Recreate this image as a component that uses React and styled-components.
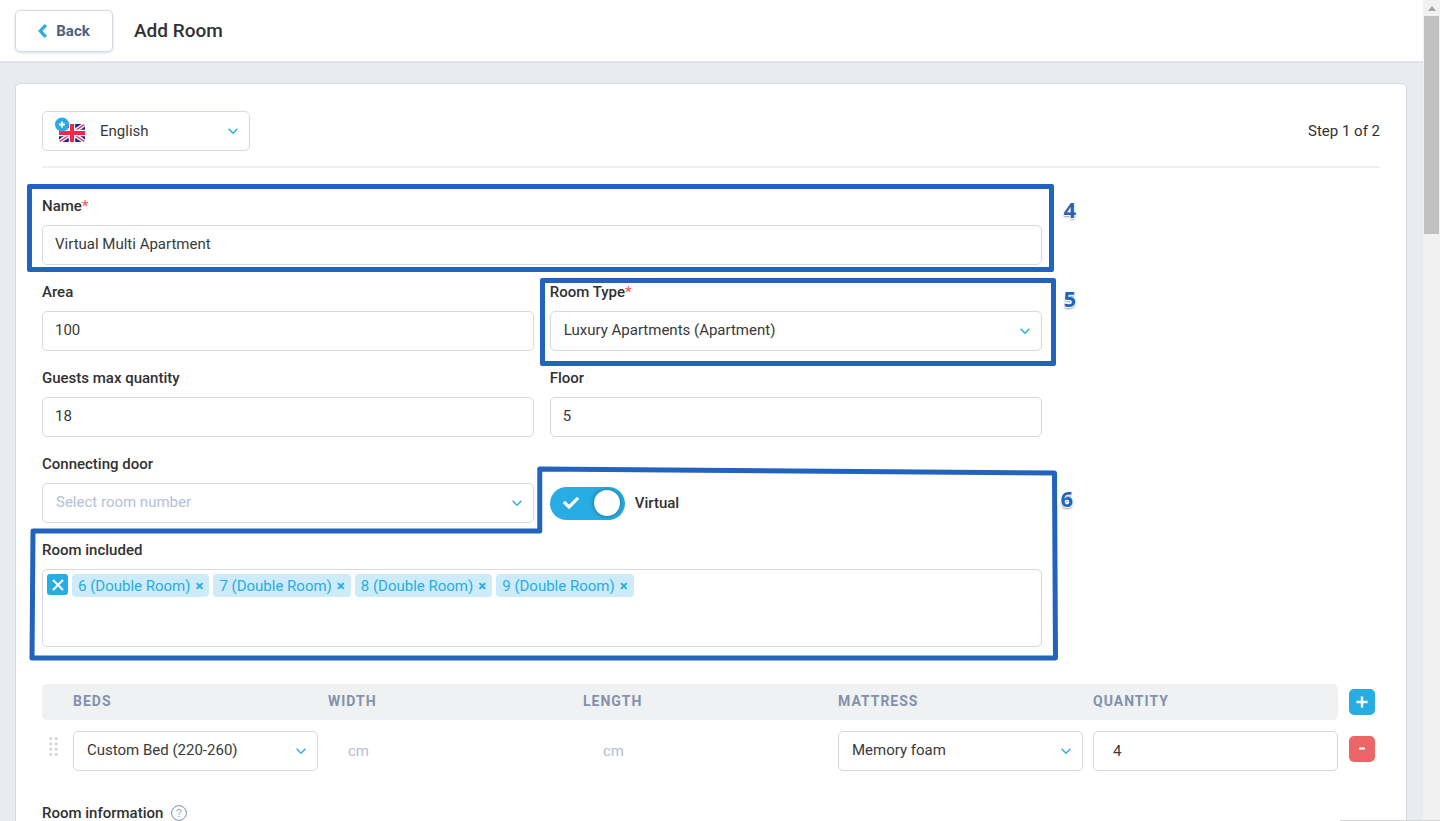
import React, { useState } from 'react';
import styled, { createGlobalStyle } from 'styled-components';
import { FaCheck } from 'react-icons/fa';

const GlobalStyle = createGlobalStyle`
  *, *::before, *::after {
    box-sizing: border-box;
  }

  body {
    margin: 0;
    background: #e8ebf0;
    color: #313131;
    font-family: Roboto, sans-serif;
    font-size: 15px;
    line-height: 20px;
  }

  input, select, button {
    font: inherit;
    color: inherit;
  }
`;

const Page = styled.div`
  display: flex;
  height: 100vh;
  overflow: hidden;
`;

const Main = styled.div`
  flex: 1;
  min-width: 0;
`;

const ScrollRail = styled.div`
  display: flex;
  flex-direction: column;
  align-items: center;
  width: 17px;
  background: #f1f1f1;
`;

const ScrollArrow = styled.div`
  display: flex;
  align-items: center;
  justify-content: center;
  height: 16px;
`;

const ScrollThumb = styled.div`
  width: 15px;
  height: 26.5%;
  background: #c1c1c1;
`;

const Header = styled.header`
  display: flex;
  align-items: center;
  gap: 21px;
  height: 63px;
  padding: 0 15px;
  background: #fff;
  border-bottom: 2px solid #dfe2e6;
`;

const BackButton = styled.button`
  display: flex;
  align-items: center;
  justify-content: center;
  gap: 9px;
  width: 98px;
  height: 42px;
  padding: 0;
  background: #fff;
  border: 1px solid #d3d9e3;
  border-radius: 5px;
  box-shadow: 0 1px 3px rgba(76, 95, 133, 0.2);
  color: #4c5f85;
  font-weight: 700;
  cursor: pointer;
`;

const Title = styled.h1`
  margin: 0;
  font-size: 19px;
  font-weight: 500;
`;

const Card = styled.section`
  margin: 20px 16px 20px 15px;
  padding: 27px 26px;
  background: #fff;
  border: 1px solid #d3d9e0;
  border-radius: 5px;
`;

const TopRow = styled.div`
  display: flex;
  align-items: center;
  justify-content: space-between;
  padding-bottom: 15px;
  border-bottom: 2px solid #eeeff0;
`;

const SelectWrap = styled.div`
  position: relative;
  width: ${(props) => props.$width || '100%'};
`;

const StyledSelect = styled.select`
  display: block;
  width: 100%;
  height: 40px;
  padding: ${(props) => (props.$flag ? '0 32px 0 57px' : '0 32px 2px 13px')};
  appearance: none;
  background: #fff;
  border: 1px solid #d5dae2;
  border-radius: 5px;
  color: ${(props) => (props.$empty ? '#b3c0d6' : '#393939')};
`;

const SelectArrow = styled.svg`
  position: absolute;
  top: 17px;
  right: 12px;
  pointer-events: none;
`;

const Flag = styled.svg`
  position: absolute;
  top: 6px;
  left: 13px;
  pointer-events: none;
`;

const FormLayout = styled.div`
  display: grid;
  grid-template-columns: repeat(12, 1fr);
  column-gap: 16px;
  padding-top: 28px;
`;

const Form = styled.div`
  grid-column: span 9;
  display: flex;
  flex-direction: column;
  gap: 17px;
`;

const Columns = styled.div`
  display: grid;
  grid-template-columns: 1fr 1fr;
  gap: 16px;
`;

const RoomSection = styled.div`
  position: relative;
  display: flex;
  flex-direction: column;
  gap: 17px;
`;

const FieldBox = styled.div`
  position: relative;
  display: flex;
  flex-direction: column;
  gap: 9px;
`;

const Label = styled.label`
  font-weight: 500;
`;

const Required = styled.span`
  color: #fb5d5d;
`;

const Input = styled.input`
  display: block;
  width: 100%;
  height: 40px;
  padding: ${(props) => (props.$wide ? '0 19px' : '0 12px 2px')};
  background: #fff;
  border: 1px solid ${(props) => (props.$plain ? 'transparent' : '#d5dae2')};
  border-radius: 5px;
  color: #393939;

  &::placeholder {
    color: #b3c0d6;
    opacity: 1;
  }
`;

const SwitchLabel = styled.label`
  align-self: end;
  display: flex;
  align-items: center;
  gap: 10px;
  height: 40px;
  font-weight: 500;
  cursor: pointer;
`;

const SwitchTrack = styled.span`
  display: flex;
  align-items: center;
  justify-content: space-between;
  flex-direction: ${(props) => (props.$on ? 'row' : 'row-reverse')};
  width: 75px;
  height: 33px;
  padding: 0 5px 0 13px;
  background: ${(props) => (props.$on ? '#27ade4' : '#c5ccd8')};
  border-radius: 17px;
  color: #fff;
`;

const SwitchInput = styled.input`
  position: absolute;
  opacity: 0;
`;

const SwitchKnob = styled.span`
  width: 26px;
  height: 26px;
  background: #fff;
  border-radius: 50%;
  box-shadow: 0 0 5px rgba(0, 0, 0, 0.4);
`;

const TagBox = styled.div`
  display: flex;
  align-items: flex-start;
  align-content: flex-start;
  flex-wrap: wrap;
  gap: 4px;
  min-height: 78px;
  padding: 4px;
  border: 1px solid #d5dae2;
  border-radius: 5px;
`;

const ClearButton = styled.button`
  display: flex;
  align-items: center;
  justify-content: center;
  width: 21px;
  height: 21px;
  padding: 0;
  background: #27ade4;
  border: 0;
  border-radius: 3px;
  cursor: pointer;
`;

const Tag = styled.span`
  display: flex;
  align-items: center;
  gap: 5px;
  height: 23px;
  padding: 0 6px;
  background: #cdebf9;
  border-radius: 4px;
  color: #27ade4;
`;

const TagRemove = styled.button`
  padding: 0;
  background: none;
  border: 0;
  font-weight: 700;
  cursor: pointer;
`;

const BedsTable = styled.table`
  width: 100%;
  margin-top: 37px;
  table-layout: fixed;
  border-collapse: separate;
  border-spacing: 0;
`;

const HeadCell = styled.th`
  width: ${(props) => props.$width || 'auto'};
  height: 36px;
  padding: 0 0 2px 10px;
  background: #eff1f3;
  border-radius: ${(props) => props.$radius || '0'};
  color: #8391ad;
  font-size: 14px;
  font-weight: 700;
  letter-spacing: 1px;
  text-align: left;
`;

const HeadAction = styled.td`
  width: 42px;
  padding: 0 0 0 11px;
`;

const Cell = styled.td`
  padding: 11px 0 0 10px;
`;

const HandleCell = styled.td`
  padding: 16px 0 0 2px;
  text-align: center;
  vertical-align: top;
`;

const ActionCell = styled.td`
  padding: 16px 0 0 11px;
  vertical-align: top;
`;

const SquareButton = styled.button`
  display: flex;
  align-items: center;
  justify-content: center;
  width: 26px;
  height: 26px;
  padding: 0;
  background: ${(props) => (props.$danger ? '#ec6667' : '#27ade4')};
  border: 0;
  border-radius: 5px;
  cursor: pointer;
`;

const InfoHeading = styled.h2`
  display: flex;
  align-items: center;
  gap: 8px;
  margin: 32px 0 0;
  font-size: 15px;
  font-weight: 500;
`;

// numbered guide marks drawn over the form
const Outline = styled.div`
  position: absolute;
  top: ${(props) => props.$top}px;
  right: ${(props) => props.$right}px;
  bottom: ${(props) => props.$bottom}px;
  left: ${(props) => props.$left}px;
  border: 5px solid #2163bd;
  border-radius: 2px;
  pointer-events: none;
`;

const OutlinePath = styled.svg`
  position: absolute;
  inset: 0;
  width: 100%;
  height: 100%;
  overflow: visible;
  pointer-events: none;
`;

const StepNumber = styled.span`
  position: absolute;
  top: ${(props) => props.$top}px;
  left: calc(100% + ${(props) => props.$gap}px);
  color: #2163bd;
  font-family: 'Noto Sans', sans-serif;
  font-size: 22px;
  font-weight: 700;
  text-shadow: 1px 0 #fff, -1px 0 #fff, 0 1px #fff, 0 2px 2px rgba(0, 0, 0, 0.4);
`;

const WidgetEdge = styled.div`
  position: fixed;
  right: 0;
  bottom: 0;
  width: 100px;
  height: 1px;
  background: #d4d4d4;
`;

const Select = ({ id, value, options, width, empty, label, children }) => (
  <SelectWrap $width={width}>
    <StyledSelect id={id} defaultValue={value} aria-label={label} $empty={empty} $flag={Boolean(children)}>
      {(options || [value]).map((option) => (
        <option key={option}>{option}</option>
      ))}
    </StyledSelect>
    {children}
    <SelectArrow width="10" height="7" viewBox="0 0 10 7" fill="none" stroke="#27ade4" strokeWidth="1.4">
      <path d="M0.6 0.8 L5 5.2 L9.4 0.8" />
    </SelectArrow>
  </SelectWrap>
);

const Field = ({ id, label, required, children }) => (
  <FieldBox>
    <Label htmlFor={id}>
      {label}
      {required && <Required>*</Required>}
    </Label>
    {children}
  </FieldBox>
);

const BritishFlag = () => (
  <Flag width="31" height="26" viewBox="0 0 31 26">
    <defs>
      <clipPath id="flag-shape">
        <rect x="4" y="7" width="26" height="18" rx="3" />
      </clipPath>
    </defs>
    <g clipPath="url(#flag-shape)">
      <rect x="4" y="7" width="26" height="18" fill="#1b22a0" />
      <path d="M4 7 L30 25 M30 7 L4 25" stroke="#fff" strokeWidth="4" />
      <path d="M4 7 L30 25 M30 7 L4 25" stroke="#f0284a" strokeWidth="1.4" />
      <path d="M17 7 V25 M4 16 H30" stroke="#fff" strokeWidth="6.4" />
      <path d="M17 7 V25 M4 16 H30" stroke="#f0284a" strokeWidth="4" />
    </g>
    <circle cx="7" cy="7.5" r="7" fill="#27ade4" />
    <path d="M7 4.5 V10.5 M4 7.5 H10" stroke="#fff" strokeWidth="1.8" />
  </Flag>
);

const DragHandle = () => (
  <svg width="9" height="21" viewBox="0 0 9 21" fill="#d3d6dd">
    {[2.5, 7.8, 13.1, 18.4].map((y) => (
      <React.Fragment key={y}>
        <circle cx="1.8" cy={y} r="1.6" />
        <circle cx="7.2" cy={y} r="1.6" />
      </React.Fragment>
    ))}
  </svg>
);

const App = () => {
  const [virtual, setVirtual] = useState(true);
  const [rooms, setRooms] = useState([6, 7, 8, 9]);

  const removeRoom = (room) => setRooms(rooms.filter((item) => item !== room));

  return (
    <Page>
      <GlobalStyle />
      <Main>
        <Header>
          <BackButton type="button">
            <svg width="9" height="14" viewBox="0 0 9 14" fill="none" stroke="#27ade4" strokeWidth="3.2">
              <path d="M7.8 1.2 L2.3 7 L7.8 12.8" />
            </svg>
            Back
          </BackButton>
          <Title>Add Room</Title>
        </Header>

        <Card>
          <TopRow>
            <Select label="Language" value="English" width="208px">
              <BritishFlag />
            </Select>
            <span>Step 1 of 2</span>
          </TopRow>

          <FormLayout>
            <Form>
              <FieldBox>
                <Label htmlFor="name">
                  Name<Required>*</Required>
                </Label>
                <Input id="name" defaultValue="Virtual Multi Apartment" />
                <Outline $top={-12} $right={-12} $bottom={-7} $left={-15} />
                <StepNumber $top={3} $gap={22}>4</StepNumber>
              </FieldBox>

              <Columns>
                <Field id="area" label="Area">
                  <Input id="area" defaultValue="100" />
                </Field>
                <FieldBox>
                  <Label htmlFor="type">
                    Room Type<Required>*</Required>
                  </Label>
                  <Select id="type" value="Luxury Apartments (Apartment)" />
                  <Outline $top={-4} $right={-14} $bottom={-15} $left={-10} />
                  <StepNumber $top={6} $gap={22}>5</StepNumber>
                </FieldBox>
              </Columns>

              <Columns>
                <Field id="guests" label="Guests max quantity">
                  <Input id="guests" defaultValue="18" />
                </Field>
                <Field id="floor" label="Floor">
                  <Input id="floor" defaultValue="5" />
                </Field>
              </Columns>

              <RoomSection>
                <Columns>
                  <Field id="door" label="Connecting door">
                    <Select id="door" value="Select room number" empty />
                  </Field>
                  <SwitchLabel>
                    <SwitchInput
                      type="checkbox"
                      checked={virtual}
                      onChange={(e) => setVirtual(e.target.checked)}
                    />
                    <SwitchTrack $on={virtual}>
                      <FaCheck size={16} />
                      <SwitchKnob />
                    </SwitchTrack>
                    Virtual
                  </SwitchLabel>
                </Columns>

                <FieldBox>
                  <Label as="span" id="rooms-label">Room included</Label>
                  <TagBox role="group" aria-labelledby="rooms-label">
                    <ClearButton type="button" aria-label="Clear all" onClick={() => setRooms([])}>
                      <svg width="12" height="12" viewBox="0 0 12 12" stroke="#fff" strokeWidth="2">
                        <path d="M1 1 L11 11 M11 1 L1 11" />
                      </svg>
                    </ClearButton>
                    {rooms.map((room) => (
                      <Tag key={room}>
                        {room} (Double Room)
                        <TagRemove type="button" onClick={() => removeRoom(room)}>×</TagRemove>
                      </Tag>
                    ))}
                  </TagBox>
                </FieldBox>

                <OutlinePath viewBox="0 0 1000 193" preserveAspectRatio="none">
                  <path
                    d="M-9 77 H498 V15 L1013 19 L1014 204 H-10 Z"
                    fill="none"
                    stroke="#2163bd"
                    strokeWidth="5"
                    strokeLinejoin="round"
                    vectorEffect="non-scaling-stroke"
                  />
                </OutlinePath>
                <StepNumber $top={34} $gap={19}>6</StepNumber>
              </RoomSection>
            </Form>
          </FormLayout>

          <BedsTable>
            <thead>
              <tr>
                <HeadCell $width="21px" $radius="5px 0 0 5px" aria-label="Order" />
                <HeadCell>BEDS</HeadCell>
                <HeadCell>WIDTH</HeadCell>
                <HeadCell>LENGTH</HeadCell>
                <HeadCell>MATTRESS</HeadCell>
                <HeadCell $radius="0 5px 5px 0">QUANTITY</HeadCell>
                <HeadAction>
                  <SquareButton type="button" aria-label="Add bed">
                    <svg width="12" height="12" viewBox="0 0 12 12" stroke="#fff" strokeWidth="2.4">
                      <path d="M6 0.5 V11.5 M0.5 6 H11.5" />
                    </svg>
                  </SquareButton>
                </HeadAction>
              </tr>
            </thead>
            <tbody>
              <tr>
                <HandleCell>
                  <DragHandle />
                </HandleCell>
                <Cell>
                  <Select label="Bed" value="Custom Bed (220-260)" />
                </Cell>
                <Cell>
                  <Input aria-label="Width" placeholder="cm" $wide $plain />
                </Cell>
                <Cell>
                  <Input aria-label="Length" placeholder="cm" $wide $plain />
                </Cell>
                <Cell>
                  <Select label="Mattress" value="Memory foam" />
                </Cell>
                <Cell>
                  <Input aria-label="Quantity" defaultValue="4" $wide />
                </Cell>
                <ActionCell>
                  <SquareButton type="button" aria-label="Remove bed" $danger>
                    <svg width="12" height="12" viewBox="0 0 12 12" stroke="#fff" strokeWidth="2">
                      <path d="M3 5.5 H9" />
                    </svg>
                  </SquareButton>
                </ActionCell>
              </tr>
            </tbody>
          </BedsTable>

          <InfoHeading>
            Room information
            <svg width="16" height="16" viewBox="0 0 16 16" fill="none" stroke="#7f8da8">
              <circle cx="8" cy="8" r="7.4" />
              <path d="M6 6.3 C6 3.6 10 3.8 10 6.2 C10 7.8 8 7.6 8 9.6 M8 10.8 V12" />
            </svg>
          </InfoHeading>
        </Card>
      </Main>

      <ScrollRail>
        <ScrollArrow>
          <svg width="8" height="5" viewBox="0 0 8 5" fill="#a3a3a3">
            <path d="M0 5 L4 0 L8 5 Z" />
          </svg>
        </ScrollArrow>
        <ScrollThumb />
      </ScrollRail>
      <WidgetEdge />
    </Page>
  );
};

export default App;
